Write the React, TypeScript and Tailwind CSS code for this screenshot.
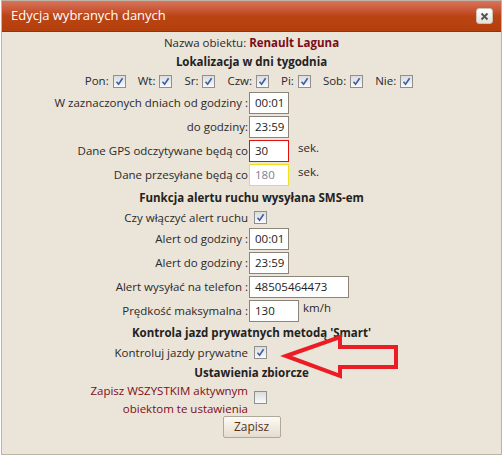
import React from 'react';

function Check({ checked = true }: { checked?: boolean }) {
  return (
    <span className="inline-flex h-[13px] w-[13px] shrink-0 items-center justify-center border border-[#8f8f8f] bg-gradient-to-b from-[#dcdcdc] to-[#fafafa]">
      {checked && (
        <svg width="9" height="9" viewBox="0 0 9 9">
          <path d="M1.5 4.8 L3.6 7.2 L7.6 1.2" fill="none" stroke="#3a5fa8" strokeWidth="1.6" />
        </svg>
      )}
    </span>
  );
}

function Field({
  value,
  width = 'w-[40px]',
  border = 'border-[#8c8479]',
  muted = false,
}: {
  value: string;
  width?: string;
  border?: string;
  muted?: boolean;
}) {
  return (
    <div
      className={`${width} h-[22px] border ${border} bg-white pl-[5px] leading-[20px] ${
        muted ? 'text-[#7a8090]' : 'text-[#222]'
      }`}
    >
      {value}
    </div>
  );
}

function Row({
  label,
  children,
  className = 'h-[24px]',
}: {
  label: React.ReactNode;
  children: React.ReactNode;
  className?: string;
}) {
  return (
    <div className={`flex items-center ${className}`}>
      <div className="w-[247px] shrink-0 pr-[1px] text-right">{label}</div>
      <div className="flex items-center gap-[9px]">{children}</div>
    </div>
  );
}

const days = ['Pon:', 'Wt:', 'Sr:', 'Czw:', 'Pi:', 'Sob:', 'Nie:'];

export default function App() {
  return (
    <div className="relative h-[457px] w-[504px] bg-white font-['Open_Sans',sans-serif] text-[11.5px] text-[#2a2a2a]">
      <div className="ml-[1px] h-[455px] w-[501px] border border-[#bdb4a6] bg-[#ebe4d8]">
        {/* Title bar */}
        <div className="flex h-[31px] items-center justify-between border-b border-[#8e3510] bg-gradient-to-b from-[#d9735a] via-[#bc4414] to-[#b33f0c] pl-[9px] pr-[8px]">
          <span className="text-[13px] text-white">Edycja wybranych danych</span>
          <span className="flex h-[16px] w-[17px] items-center justify-center rounded-[3px] border border-[#c9c2ba] bg-gradient-to-b from-white to-[#e4e1dc]">
            <svg width="9" height="9" viewBox="0 0 9 9">
              <path d="M1.5 1.5 L7.5 7.5 M7.5 1.5 L1.5 7.5" stroke="#555" strokeWidth="2" />
            </svg>
          </span>
        </div>

        {/* Content */}
        <div className="flex flex-col">
          <div className="mt-[2px] flex h-[18px] items-center justify-center">
            Nazwa obiektu:&nbsp;<b className="text-[#7a0c18]">Renault Laguna</b>
          </div>
          <div className="flex h-[19px] items-center justify-center font-bold text-[#222]">
            Lokalizacja w dni tygodnia
          </div>
          <div className="flex h-[20px] items-center justify-center gap-[12px] pr-[5px]">
            {days.map((d) => (
              <span key={d} className="flex items-center gap-[4px]">
                {d}
                <Check />
              </span>
            ))}
          </div>
          <Row label="W zaznaczonych dniach od godziny :">
            <Field value="00:01" />
          </Row>
          <Row label="do godziny:">
            <Field value="23:59" />
          </Row>
          <Row label="Dane GPS odczytywane będą co">
            <Field value="30" border="border-[#e01010]" />
            <span className="-mt-[6px]">sek.</span>
          </Row>
          <Row label="Dane przesyłane będą co">
            <Field value="180" border="border-[#f0e020]" muted />
            <span className="-mt-[6px]">sek.</span>
          </Row>
          <div className="flex h-[21px] items-center justify-center font-bold text-[#222]">
            Funkcja alertu ruchu wysyłana SMS-em
          </div>
          <Row label="Czy włączyć alert ruchu" className="h-[19px]">
            <span className="pl-[5px]">
              <Check />
            </span>
          </Row>
          <Row label="Alert od godziny :">
            <Field value="00:01" />
          </Row>
          <Row label="Alert do godziny :">
            <Field value="23:59" />
          </Row>
          <Row label="Alert wysyłać na telefon :">
            <Field value="48505464473" width="w-[100px]" />
          </Row>
          <Row label="Prędkość maksymalna :">
            <Field value="130" width="w-[50px]" />
            <span className="-mt-[6px] -ml-[5px]">km/h</span>
          </Row>
          <div className="flex h-[20px] items-center justify-center font-bold text-[#222]">
            Kontrola jazd prywatnych metodą 'Smart'
          </div>
          <Row label="Kontroluj jazdy prywatne" className="h-[20px]">
            <span className="pl-[5px]">
              <Check />
            </span>
          </Row>
          <div className="flex h-[20px] items-center justify-center font-bold text-[#222]">
            Ustawienia zbiorcze
          </div>
          <Row
            label={
              <span className="leading-[16px] text-[#7d0d18]">
                Zapisz WSZYSTKIM aktywnym
                <br />
                obiektom te ustawienia
              </span>
            }
            className="h-[33px]"
          >
            <span className="pl-[5px]">
              <Check checked={false} />
            </span>
          </Row>
          <div className="flex justify-center">
            <button className="h-[22px] w-[58px] rounded-[2px] border border-[#b0a898] bg-gradient-to-b from-[#fdfbf7] to-[#e4dccd] text-[12px] text-[#5a3412]">
              Zapisz
            </button>
          </div>
        </div>
      </div>

      {/* red arrow annotation */}
      <svg className="absolute left-0 top-0" width="504" height="457">
        <polygon
          points="286,356 340,337 340,347 396,347 396,367 340,367 340,376"
          fill="none"
          stroke="#ec1c24"
          strokeWidth="4"
          strokeLinejoin="miter"
        />
      </svg>
    </div>
  );
}
